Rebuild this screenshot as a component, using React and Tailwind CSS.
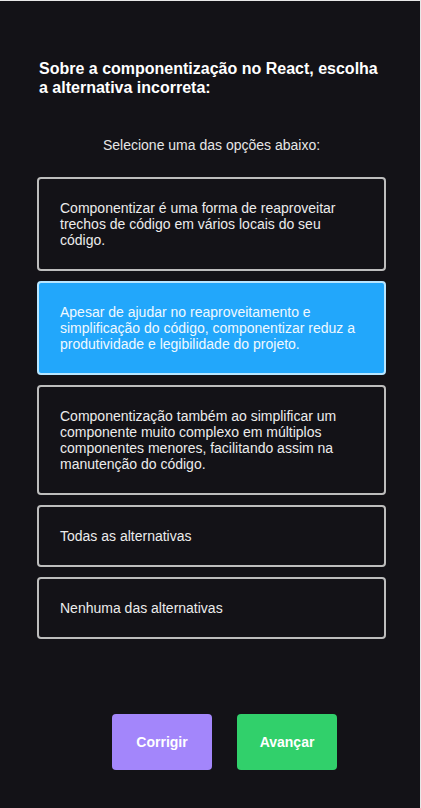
import React, { useState } from 'react';

const options = [
  'Componentizar é uma forma de reaproveitar trechos de código em vários locais do seu código.',
  'Apesar de ajudar no reaproveitamento e simplificação do código, componentizar reduz a produtividade e legibilidade do projeto.',
  'Componentização também ao simplificar um componente muito complexo em múltiplos componentes menores, facilitando assim na manutenção do código.',
  'Todas as alternativas',
  'Nenhuma das alternativas',
];

const App = () => {
  const [selected, setSelected] = useState(1);

  return (
    <div className="min-h-[808px] bg-[#131217] border-t border-r border-[#e8e8e8] font-['Liberation_Sans',Arial,sans-serif]">
      <div className="w-[349px] ml-[37px] pt-[58px]">
        <h1 className="pl-[2px] text-[16px] leading-[19px] font-bold text-white">
          Sobre a componentização no React, escolha a alternativa incorreta:
        </h1>

        <p className="mt-[38px] text-center text-[14px] text-[#e6e6e6]">
          Selecione uma das opções abaixo:
        </p>

        <div className="mt-[21px] flex flex-col gap-[10px]">
          {options.map((text, i) => (
            <button
              key={i}
              onClick={() => setSelected(i)}
              className={`text-left rounded-[4px] border-2 px-[21px] py-[21px] text-[14px] leading-[16px] ${
                selected === i
                  ? 'bg-[#22a7fb] border-[#b8e6ff] text-[#f0f9ff]'
                  : 'bg-[#131217] border-[#bdbdbd] text-[#ececec]'
              }`}
            >
              {text}
            </button>
          ))}
        </div>
      </div>

      <div className="mt-[75px] ml-[112px] flex gap-[25px]">
        <button className="w-[100px] h-[56px] rounded-[4px] bg-[#a386fb] text-white font-bold text-[14px]">
          Corrigir
        </button>
        <button className="w-[100px] h-[56px] rounded-[4px] bg-[#31d06b] text-white font-bold text-[14px]">
          Avançar
        </button>
      </div>
    </div>
  );
};

export default App;
